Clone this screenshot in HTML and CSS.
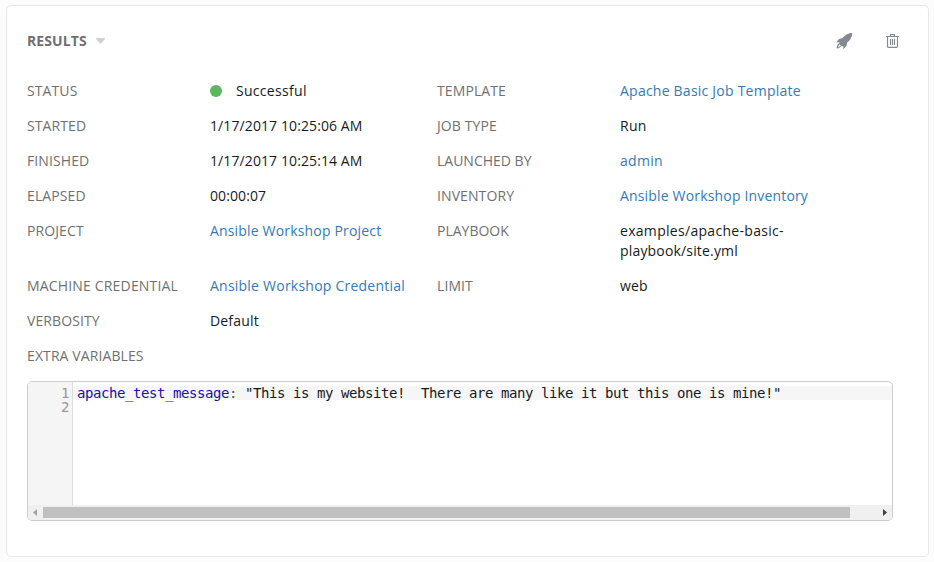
FILE: index.html
```html
<!DOCTYPE html>
<html lang="en">
<head>
<meta charset="utf-8">
<title>Job results</title>
<link rel="stylesheet" href="styles.css">
</head>
<body>
<main class="panel">
  <header class="panel-header">
    <h1 class="title">RESULTS</h1>
    <svg class="caret" width="9" height="6" viewBox="0 0 9 6"><path d="M0 0H9V1L5 5.4H4L0 1Z" fill="#d0d0d0"/></svg>
    <div class="actions">
      <svg width="17" height="17" viewBox="0 0 17 17" fill="#848992"><path d="M16.3 0C12.6.1 10 1.3 7.6 4L6.1 5.3 3 6 0 9.4 3.4 9 2.7 10.7 5.8 13.6 7.2 13 7.4 16.2 10.6 12.8 11.1 9.7C14.2 7 16.2 4.4 16.3 0Z"/><path d="M3 10.8C1.3 11.6.6 13.2.7 15.6 2.9 15.7 4.4 14.8 5.1 13.1L4.1 12.7C3.7 13.6 3.1 14.1 2.2 14.2 2.2 13.2 2.7 12.6 3.5 12.1Z"/></svg>
      <svg width="13" height="14" viewBox="0 0 13 14" fill="none" stroke="#848992" stroke-width="1.15"><path d="M0 2.5H13M4.5 2V.6H8.5V2M1.5 3V12.4Q1.5 13.3 2.5 13.3H10.5Q11.5 13.3 11.5 12.4V3M4.5 5V11M6.5 5V11M8.5 5V11"/></svg>
    </div>
  </header>
  <dl class="details">
    <dt>STATUS</dt><dd class="wider"><span class="dot"></span>Successful</dd>
    <dt>TEMPLATE</dt><dd class="wide"><a>Apache Basic Job Template</a></dd>
    <dt>STARTED</dt><dd>1/17/2017 10:25:06 AM</dd>
    <dt>JOB TYPE</dt><dd class="wider">Run</dd>
    <dt>FINISHED</dt><dd>1/17/2017 10:25:14 AM</dd>
    <dt class="tight">LAUNCHED BY</dt><dd class="wider"><a>admin</a></dd>
    <dt>ELAPSED</dt><dd>00:00:07</dd>
    <dt>INVENTORY</dt><dd class="medium"><a>Ansible Workshop Inventory</a></dd>
    <dt>PROJECT</dt><dd class="medium"><a>Ansible Workshop Project</a></dd>
    <dt class="tight">PLAYBOOK</dt><dd class="wider">examples/apache-basic-<br><span class="medium">playbook/site.yml</span></dd>
    <dt class="medium">MACHINE CREDENTIAL</dt><dd class="wide"><a>Ansible Workshop Credential</a></dd>
    <dt>LIMIT</dt><dd>web</dd>
    <dt>VERBOSITY</dt><dd class="medium">Default</dd>
  </dl>
  <h2 class="label">EXTRA VARIABLES</h2>
  <section class="editor">
    <div class="code">
      <pre class="gutter">1
2</pre>
      <pre class="lines"><span class="active"><span class="key">apache_test_message</span><span class="colon">:</span> "This is my website!  There are many like it but this one is mine!"</span></pre>
    </div>
    <div class="scrollbar">
      <svg width="4" height="7" viewBox="0 0 4 7"><path d="M4 0V7L0 3.5Z" fill="#a3a3a3"/></svg>
      <div class="thumb"></div>
      <svg width="4" height="7" viewBox="0 0 4 7"><path d="M0 0V7L4 3.5Z" fill="#404040"/></svg>
    </div>
  </section>
</main>
</body>
</html>
```

FILE: styles.css
```css
* { box-sizing: border-box; }
body {
  margin: 0;
  padding: 5px 5px 5px 6px;
  height: 562px;
  background: #fcfcfc;
  font: 14px/20px "Open Sans", sans-serif;
  letter-spacing: .1px;
  color: #161b1f;
}
.panel {
  height: 552px;
  padding: 25px 35px 0 20px;
  background: #fff;
  border: 1px solid #e8e8e8;
  border-radius: 5px;
}
.panel-header { display: flex; align-items: center; height: 20px; }
.title { margin: 0; font-size: 14px; line-height: 20px; font-weight: 700; color: #707070; }
.caret { margin-left: 9px; }
.actions { display: flex; align-items: center; gap: 33px; margin-left: auto; margin-right: -6px; }
.details {
  display: grid;
  grid-template-columns: 183px 227px 183px 1fr;
  row-gap: 15px;
  margin: 30px 0 0;
}
dt, .label { color: #707070; }
dd { margin: 0; }
dd a { color: #337ab7; }
.tight { letter-spacing: 0; }
.medium { letter-spacing: .17px; }
.wide { letter-spacing: .23px; }
.wider { letter-spacing: .3px; }
.dot {
  display: inline-block;
  width: 12px;
  height: 12px;
  margin-right: 14px;
  border-radius: 50%;
  background: #5cb85c;
  vertical-align: -1px;
}
.label { margin: 15px 0; font-size: 14px; font-weight: 400; line-height: 20px; }
.editor {
  width: 866px;
  height: 140px;
  border: 1px solid #ccc;
  border-radius: 5px;
  overflow: hidden;
}
.code {
  display: flex;
  height: 123px;
  font: 14px/14px "DejaVu Sans Mono", monospace;
  letter-spacing: -.428px;
}
.gutter {
  width: 45px;
  margin: 0;
  padding: 4px 3px 0 0;
  background: #f5f5f5;
  border-right: 1px solid #ddd;
  color: #999;
  font: inherit;
  text-align: right;
}
.lines { flex: 1; margin: 0; padding-top: 4px; font: inherit; }
.active { display: block; padding-left: 4px; background: #f6f6f6; }
.key { color: #21109f; }
.colon { color: #555; }
.scrollbar { display: flex; align-items: center; height: 15px; padding: 0 5px; background: #f0f0f0; }
.thumb { width: 807px; height: 11px; margin: 0 33px 0 6px; background: #c0c0c0; }
```
